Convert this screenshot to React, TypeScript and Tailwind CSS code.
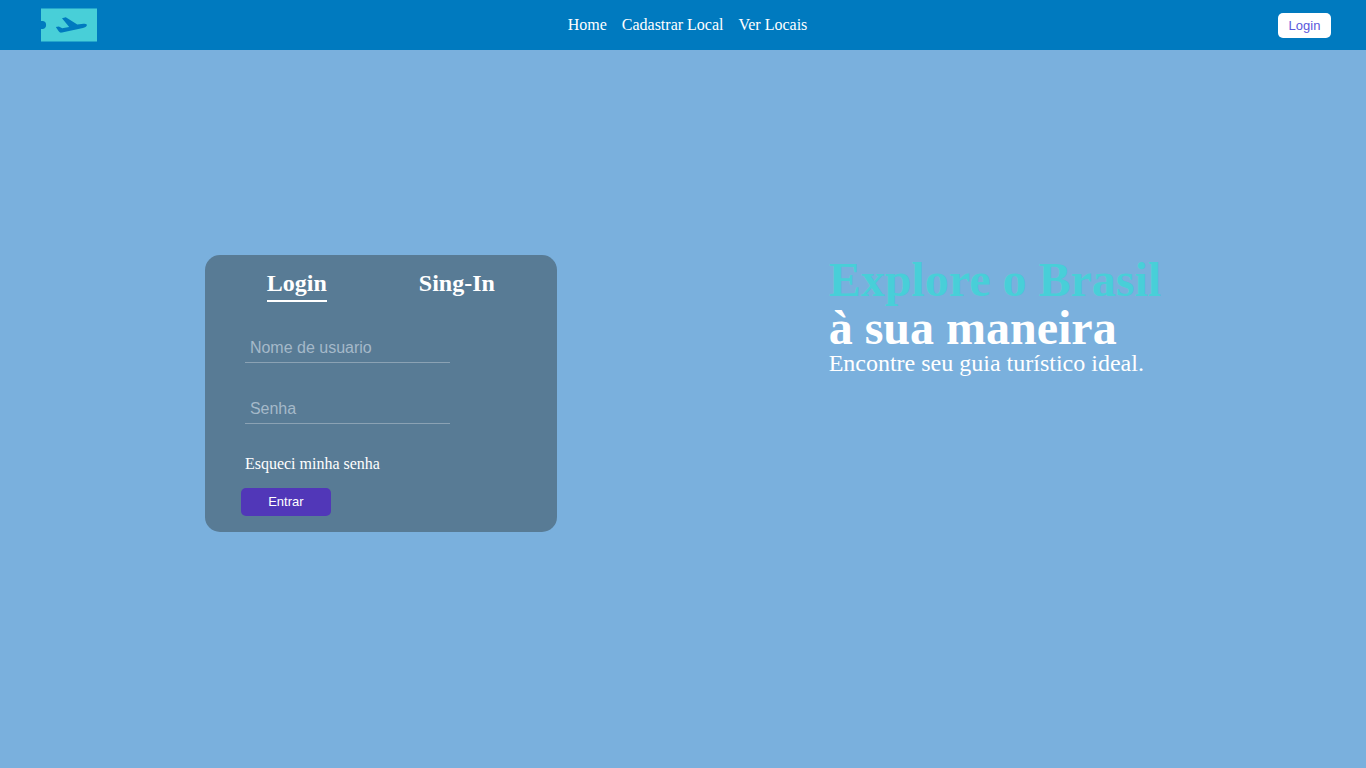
import { useState } from "react";

const links = ["Home", "Cadastrar Local", "Ver Locais"];

function Logo() {
  return (
    <svg viewBox="0 0 62 34" className="h-[34px] w-[62px]" role="img" aria-label="Guia de viagens">
      <path
        fill="#48cfd8"
        d="M6 .5H62V33.500H6V21A4.200 4.200 0 0 0 8 20.900A4 4 0 0 0 8 13.100A4.200 4.200 0 0 0 6 13Z"
      />
      <path
        fill="#007abf"
        d="M27 10.200L30.800 9.300L42.300 16.600L48.500 15.800C51 15.500 52.200 16.200 51.800 17.600C51.500 18.900 50 19.600 48 20L27 24.600C25.300 24.900 24.500 24.500 23.700 23.300L20.800 19L23.900 18.600L27.200 20.300L34.200 18.900Z"
      />
    </svg>
  );
}

function Field({ id, label, type }: { id: string; label: string; type: string }) {
  return (
    <input
      id={id}
      type={type}
      aria-label={label}
      placeholder={label}
      className="h-[31px] w-[205px] border-b border-[#8ba2b4] bg-transparent px-[5px] pt-0.5 font-['Liberation_Sans',Arial,sans-serif] text-base text-white outline-none placeholder:text-[#a5b9c9]"
    />
  );
}

export default function App() {
  const [tab, setTab] = useState("Login");

  return (
    <div className="flex min-h-screen flex-col bg-[#7ab0dd] font-['Liberation_Serif','Times_New_Roman',serif] text-white">
      <header className="flex h-[50px] items-center justify-between bg-[#007abf] px-[35px]">
        <a href="#">
          <Logo />
        </a>
        <nav className="flex gap-[15px] text-base">
          {links.map((link) => (
            <a key={link} href="#">
              {link}
            </a>
          ))}
        </nav>
        <button
          type="button"
          className="h-[25px] w-[53px] rounded-[5px] bg-white pt-px font-['Liberation_Sans',Arial,sans-serif] text-[13px] text-[#5a58dc]"
        >
          Login
        </button>
      </header>

      <main className="flex flex-1 items-start justify-between px-[15%] pt-[205px]">
        <section className="w-[352px] rounded-[15px] bg-[#587b95] px-4 pt-3 pb-4">
          <div className="flex justify-around">
            {["Login", "Sing-In"].map((name) => (
              <button
                key={name}
                type="button"
                onClick={() => setTab(name)}
                className={
                  name === tab
                    ? "h-[35px] border-b-2 border-white pb-0.5 text-2xl font-bold"
                    : "h-[35px] border-b-2 border-transparent pb-0.5 text-2xl font-bold"
                }
              >
                {name}
              </button>
            ))}
          </div>
          <form className="flex flex-col items-start px-5" onSubmit={(e) => e.preventDefault()}>
            <div className="flex flex-col items-start gap-[30px] px-1 pt-[30px]">
              <Field id="usuario" label="Nome de usuario" type="text" />
              <Field id="senha" label="Senha" type="password" />
              <a href="#" className="text-base leading-5">
                Esqueci minha senha
              </a>
            </div>
            <button
              type="submit"
              className="mt-[14px] h-7 w-[90px] rounded-[5px] bg-[#5137b8] font-['Liberation_Sans',Arial,sans-serif] text-[13px]"
            >
              Entrar
            </button>
          </form>
        </section>

        <section className="pt-px">
          <h1 className="text-5xl leading-[48px] font-bold">
            <span className="block text-[#48cfd8]">Explore o Brasil</span>
            <span className="block">à sua maneira</span>
          </h1>
          <p className="text-2xl leading-[22px]">Encontre seu guia turístico ideal.</p>
        </section>
      </main>
    </div>
  );
}
